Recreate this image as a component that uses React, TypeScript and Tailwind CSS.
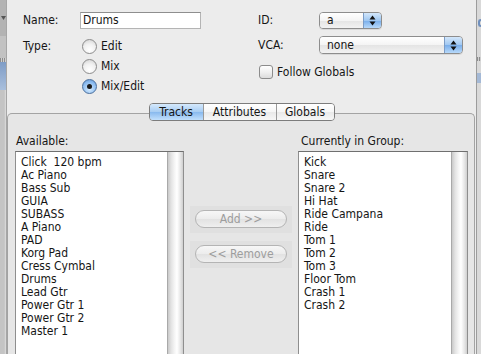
import React from 'react';

const available = [
  'Click  120 bpm',
  'Ac Piano',
  'Bass Sub',
  'GUIA',
  'SUBASS',
  'A Piano',
  'PAD',
  'Korg Pad',
  'Cress Cymbal',
  'Drums',
  'Lead Gtr',
  'Power Gtr 1',
  'Power Gtr 2',
  'Master 1',
];

const inGroup = [
  'Kick',
  'Snare',
  'Snare 2',
  'Hi Hat',
  'Ride Campana',
  'Ride',
  'Tom 1',
  'Tom 2',
  'Tom 3',
  'Floor Tom',
  'Crash 1',
  'Crash 2',
];

function Radio({ checked, label }: { checked?: boolean; label: string }) {
  return (
    <div className="flex h-[14px] items-center">
      {checked ? (
        <span className="flex h-[15px] w-[15px] items-center justify-center rounded-full border border-[#4a6f9c] bg-[radial-gradient(circle_at_50%_70%,#d6ecff,#8ebdf0_60%,#5f95d6)]">
          <span className="h-[5px] w-[5px] rounded-full bg-[#1b1b1b]" />
        </span>
      ) : (
        <span className="h-[15px] w-[15px] rounded-full border border-[#8c8c8c] bg-[radial-gradient(circle_at_50%_75%,#ffffff,#f1f1f1_50%,#cfcfcf)]" />
      )}
      <span className="ml-[4px]">{label}</span>
    </div>
  );
}

function Arrows() {
  return (
    <svg width="7" height="11" viewBox="0 0 7 11">
      <path d="M3.5 0.5 L6.5 4.5 L0.5 4.5 Z" fill="#111" />
      <path d="M3.5 10.5 L6.5 6.5 L0.5 6.5 Z" fill="#111" />
    </svg>
  );
}

function Popup({ value, wide }: { value: string; wide?: boolean }) {
  return (
    <div
      className={
        wide
          ? 'flex h-[18px] w-[144px] overflow-hidden rounded-[4px] border border-[#8d8d8d] shadow-[0_1px_0_rgba(0,0,0,0.08)]'
          : 'flex h-[17px] w-[63px] overflow-hidden rounded-[4px] border border-[#8d8d8d] shadow-[0_1px_0_rgba(0,0,0,0.08)]'
      }
    >
      <div className="flex flex-1 items-center bg-[linear-gradient(#ffffff,#f4f4f4_50%,#e4e4e4_51%,#f2f2f2)] pl-[7px]">
        {value}
      </div>
      <div className="flex w-[18px] items-center justify-center border-l border-[#7b9cc6] bg-[linear-gradient(#d3e7fb,#9fc7f1_50%,#78adea_51%,#b7d9fa)]">
        <Arrows />
      </div>
    </div>
  );
}

function ListBox({ items, wide }: { items: string[]; wide?: boolean }) {
  return (
    <div
      className={
        wide
          ? 'flex h-[220px] w-[170px] border border-[#8e8e8e] border-t-[#6f6f6f]'
          : 'flex h-[220px] w-[169px] border border-[#8e8e8e] border-t-[#6f6f6f]'
      }
    >
      <div className="flex flex-1 flex-col bg-white pl-[5px] pt-[4px]">
        {items.map((it) => (
          <div key={it} className="h-[13px] whitespace-pre leading-[13px]">
            {it}
          </div>
        ))}
      </div>
      <div className="w-[16px] border-l border-[#a9a9a9] bg-[linear-gradient(to_right,#c9c9c9,#e2e2e2_20%,#f6f6f6_45%,#ffffff_60%,#e4e4e4_85%,#cfcfcf)]" />
    </div>
  );
}

function DisabledButton({ label }: { label: string }) {
  return (
    <div className="flex w-[102px] justify-center bg-[#e0e0e0] pb-[5px] pt-[4px]">
      <div className="flex h-[18px] w-[92px] items-center justify-center rounded-full border border-[#b4b4b4] bg-[linear-gradient(#f7f7f7,#ececec_50%,#e2e2e2_51%,#efefef)] text-[#9d9d9d]">
        {label}
      </div>
    </div>
  );
}

export default function App() {
  return (
    <div className="flex h-[354px] w-[481px] overflow-hidden bg-[#ececec] font-['DejaVu_Sans_Condensed','DejaVu_Sans',sans-serif] text-[12px] leading-[13px] text-[#151515]">
      {/* edge of the window behind */}
      <div className="flex w-[7px] shrink-0 flex-col border-r border-[#a6a6a6]">
        <div className="flex h-[36px] items-center bg-[#b3b3b3] pl-[1px]">
          <svg width="5" height="4" viewBox="0 0 5 4">
            <path d="M0 0 L5 0 L2.5 4 Z" fill="#555" />
          </svg>
        </div>
        <div className="h-[22px] bg-[#c2c2c2]" />
        <div className="h-[4px] bg-[repeating-linear-gradient(to_right,#8c8c8c_0_1px,#cfcfcf_1px_2px)]" />
        <div className="h-[28px] bg-[linear-gradient(#7e9cc6,#a9bfdc)]" />
        <div className="flex-1 bg-[linear-gradient(to_right,#c4c4c4_70%,#dedede)]" />
      </div>

      <div className="flex w-[469px] shrink-0 flex-col">
        {/* top form */}
        <div className="flex h-[103px] shrink-0">
          <div className="w-[251px] pl-[16px] pt-[12px]">
            <div className="flex h-[17px] items-center">
              <span className="w-[57px]">Name:</span>
              <div className="flex h-[17px] w-[121px] items-center border border-[#b4b4b4] border-t-[#8e8e8e] bg-white pl-[2px]">
                Drums
              </div>
            </div>
            <div className="mt-[10px] flex">
              <span className="w-[57px] pt-[1px]">Type:</span>
              <div className="flex flex-col gap-[6px] pl-[2px]">
                <Radio label="Edit" />
                <Radio label="Mix" />
                <Radio checked label="Mix/Edit" />
              </div>
            </div>
          </div>
          <div className="pt-[12px]">
            <div className="flex h-[17px] items-center">
              <span className="w-[61px]">ID:</span>
              <Popup value="a" />
            </div>
            <div className="mt-[7px] flex h-[18px] items-center">
              <span className="w-[61px]">VCA:</span>
              <Popup value="none" wide />
            </div>
            <div className="ml-[1px] mt-[11px] flex h-[14px] items-center">
              <span className="h-[14px] w-[14px] rounded-[3px] border border-[#8c8c8c] bg-[linear-gradient(#ffffff,#f0f0f0_50%,#dcdcdc)]" />
              <span className="ml-[4px]">Follow Globals</span>
            </div>
          </div>
        </div>

        {/* tabs */}
        <div className="relative z-10 flex h-[18px] shrink-0 justify-center">
          <div className="flex h-[18px] overflow-hidden rounded-[4px] border border-[#7c7c7c]">
            <div className="flex w-[53px] items-center justify-center bg-[linear-gradient(#d5e9fc,#a6ccf3_50%,#88b9ee_51%,#c2e0fd)]">
              Tracks
            </div>
            <div className="flex w-[73px] items-center justify-center border-l border-[#9a9a9a] bg-[linear-gradient(#ffffff,#f6f6f6_50%,#e9e9e9_51%,#f7f7f7)]">
              Attributes
            </div>
            <div className="flex w-[58px] items-center justify-center border-l border-[#9a9a9a] bg-[linear-gradient(#ffffff,#f6f6f6_50%,#e9e9e9_51%,#f7f7f7)]">
              Globals
            </div>
          </div>
        </div>

        {/* tab box */}
        <div className="-mt-[8px] mr-[1px] flex min-h-0 flex-1 overflow-hidden rounded-t-[5px] border border-b-0 border-[#a3a3a3] bg-[#e6e6e6] pl-[7px] pt-[21px]">
          <div className="flex shrink-0 flex-col">
            <span className="h-[13px] pl-[1px]">Available:</span>
            <div className="mt-[3px]">
              <ListBox items={available} />
            </div>
          </div>
          <div className="flex w-[114px] shrink-0 flex-col items-center pt-[71px]">
            <DisabledButton label="Add >>" />
            <div className="mt-[8px]">
              <DisabledButton label="<< Remove" />
            </div>
          </div>
          <div className="flex shrink-0 flex-col">
            <span className="h-[13px] pl-[3px]">Currently in Group:</span>
            <div className="mt-[3px]">
              <ListBox items={inGroup} wide />
            </div>
          </div>
        </div>
      </div>

      {/* window behind, right edge */}
      <div className="flex flex-1 flex-col border-l border-[#9c9c9c] bg-[#d9d9d9]">
        <div className="h-[19px]" />
        <div className="ml-[1px] h-[8px] w-[3px] rounded-l-[3px] border-y-2 border-l-2 border-[#6f8fbd]" />
        <div className="h-[30px]" />
        <div className="h-[4px] bg-[repeating-linear-gradient(to_right,#8c8c8c_0_1px,#d0d0d0_1px_2px)]" />
        <div className="h-[12px]" />
        <div className="h-[10px] bg-[#a4b9d6]" />
        <div className="flex-1" />
      </div>
    </div>
  );
}
